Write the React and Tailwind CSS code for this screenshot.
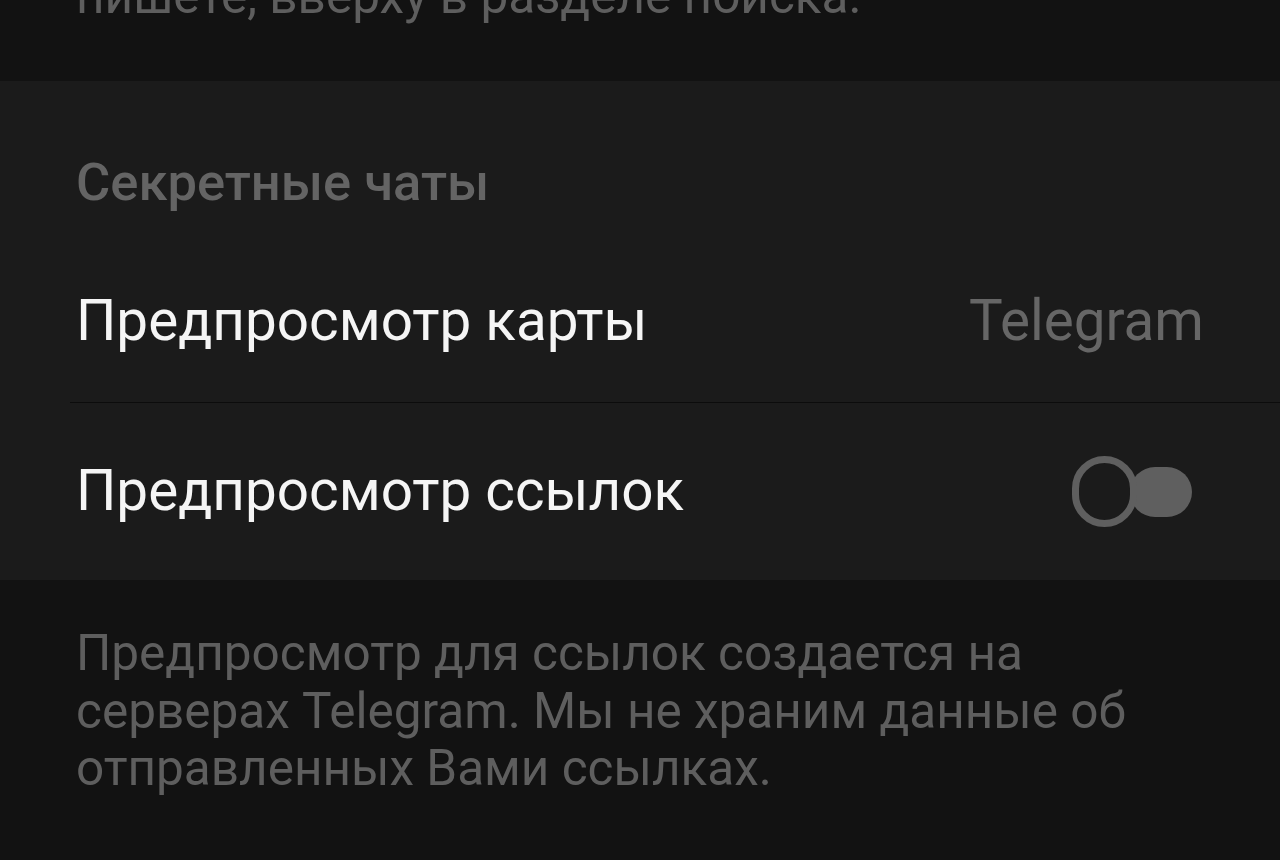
import React from 'react';

const Toggle = () => (
  <div className="relative w-[122px] h-[72px] flex items-center">
    <div className="ml-[58px] w-[62px] h-[50px] rounded-full bg-[#5f5f5f]" />
    <div className="absolute left-0 top-0 w-[65px] h-[71px] rounded-full border-[7px] border-[#5f5f5f] bg-[#1b1b1b]" />
  </div>
);

const App = () => {
  return (
    <div className="w-[1280px] h-[860px] overflow-hidden bg-[#121212] font-['Roboto',sans-serif]">
      <div className="h-[81px] relative overflow-hidden">
        <p className="absolute left-[76px] top-[-32px] text-[49.5px] leading-[57px] text-[#5e5e5e] whitespace-nowrap">
          пишете, вверху в разделе поиска.
        </p>
      </div>

      <section className="bg-[#1b1b1b] h-[499px] flex flex-col">
        <div className="h-[160px] flex items-end pl-[76px] pb-[33px]">
          <h3 className="text-[52.5px] leading-none font-medium text-[#646464]">Секретные чаты</h3>
        </div>
        <div className="h-[161px] flex items-center justify-between pl-[76px] pr-[76px]">
          <span className="text-[56.6px] text-[#f5f5f5]">Предпросмотр карты</span>
          <span className="text-[56.6px] text-[#666666]">Telegram</span>
        </div>
        <div className="ml-[70px] h-px bg-[#0c0c0c]" />
        <div className="flex-1 flex items-center justify-between pl-[76px] pr-[86px]">
          <span className="text-[56.6px] text-[#f5f5f5]">Предпросмотр ссылок</span>
          <Toggle />
        </div>
      </section>

      <div className="pt-[45px] pl-[76px] pr-[120px]">
        <p className="text-[49.5px] leading-[57.5px] text-[#5e5e5e]">
          Предпросмотр для ссылок создается на серверах Telegram. Мы не храним данные об отправленных Вами ссылках.
        </p>
      </div>
    </div>
  );
};

export default App;
